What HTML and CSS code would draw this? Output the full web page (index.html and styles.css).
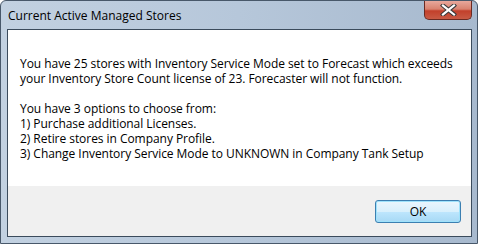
FILE: index.html
```html
<!DOCTYPE html>
<html lang="en">
<head>
  <meta charset="UTF-8" />
  <title>Current Active Managed Stores</title>
  <link rel="stylesheet" href="styles.css">
</head>
<body>
  <div class="window">
    <div class="titlebar">
      <span class="title">Current Active Managed Stores</span>
      <div class="close-btn">
        <svg width="17" height="12" viewBox="0 0 17 12">
          <path d="M3 1.5 L14 10.5 M14 1.5 L3 10.5" stroke="#3a3a3a" stroke-width="4.2" stroke-linecap="square" />
          <path d="M3 1.5 L14 10.5 M14 1.5 L3 10.5" stroke="#ffffff" stroke-width="2.2" stroke-linecap="square" />
        </svg>
      </div>
    </div>
    <div class="client">
      <div class="message">
        <p>You have 25 stores with Inventory Service Mode set to Forecast which exceeds<br>your Inventory Store Count license of 23. Forecaster will not function.</p>
        <p>You have 3 options to choose from:<br>1) Purchase additional Licenses.<br>2) Retire stores in Company Profile.<br>3) Change Inventory Service Mode to UNKNOWN in Company Tank Setup</p>
      </div>
      <div class="footer">
        <button class="ok-btn">OK</button>
      </div>
    </div>
  </div>
</body>
</html>
```

FILE: styles.css
```css
body {
  margin: 0;
  background: #fff;
  font-family: "Open Sans", "Noto Sans", sans-serif;
}
.window {
  width: 478px;
  height: 244px;
  box-sizing: border-box;
  border: 1px solid #48586a;
  border-radius: 6px 6px 0 0;
  background: linear-gradient(90deg, #c2d1e1 0%, #b6c7da 50%, #a7b9ce 100%);
  display: flex;
  flex-direction: column;
  overflow: hidden;
}
.titlebar {
  height: 28px;
  display: flex;
  justify-content: space-between;
  align-items: flex-start;
  padding-left: 7px;
  padding-right: 5px;
}
.title {
  font-size: 12px;
  color: #000;
  margin-top: 6px;
}
.close-btn {
  width: 48px;
  height: 19px;
  box-sizing: border-box;
  border: 1px solid #6a2a22;
  border-top: none;
  border-radius: 0 0 5px 5px;
  background: linear-gradient(#e8a89c 0%, #d9826f 45%, #c2402b 55%, #c85a44 100%);
  display: flex;
  align-items: center;
  justify-content: center;
}
.client {
  flex: 1;
  margin: 0 5px 6px 6px;
  border: 1px solid #3b4b5c;
  display: flex;
  flex-direction: column;
  background: #f0f0f0;
}
.message {
  background: #fff;
  height: 156px;
  box-sizing: border-box;
  padding: 26px 12px 0 12px;
  font-size: 12px;
  line-height: 15px;
  letter-spacing: -0.05px;
  color: #000;
}
.message p {
  margin: 0 0 15px 0;
}
.footer {
  flex: 1;
  display: flex;
  justify-content: flex-end;
  align-items: flex-start;
  padding: 14px 10px 0 0;
}
.ok-btn {
  width: 86px;
  height: 23px;
  font-family: inherit;
  font-size: 12px;
  color: #000;
  border: 1px solid #3c7fb1;
  border-radius: 3px;
  background: linear-gradient(#eaf6fd 0%, #d9f0fc 50%, #bee6fd 51%, #a7d9f5 100%);
  box-shadow: inset 0 0 0 1px #9fe2fb;
  padding: 0;
}
```
